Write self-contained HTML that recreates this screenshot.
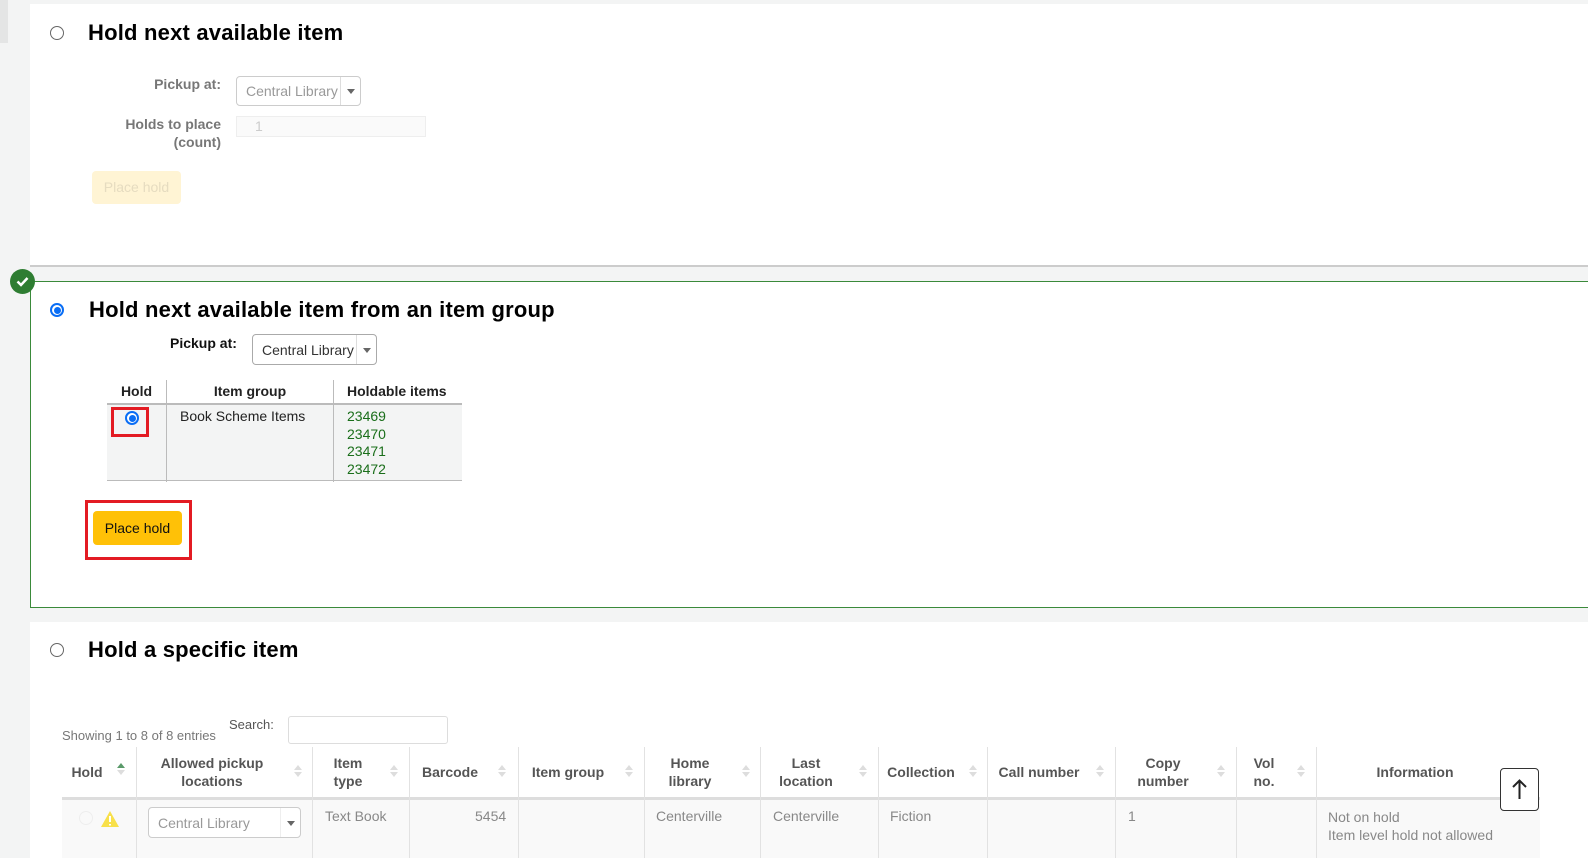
<!DOCTYPE html>
<html><head><style>
*{box-sizing:border-box;margin:0;padding:0}
body{width:1588px;height:858px;overflow:hidden;background:#f3f4f4;font-family:"Liberation Sans",sans-serif;position:relative;color:#000}
.a{position:absolute}
.panel{position:absolute;left:30px;right:0;background:#fff}
h2{position:absolute;font-size:22px;font-weight:bold;white-space:nowrap;letter-spacing:0.2px}
.radio{position:absolute;width:14px;height:14px;border-radius:50%;border:1px solid #666;background:#fff}
.radio.on{border:2px solid #0a6ef5}
.radio.on:after{content:"";position:absolute;left:1.5px;top:1.5px;width:7px;height:7px;border-radius:50%;background:#0a6ef5}
.lbl{position:absolute;font-size:14px;font-weight:bold;text-align:right;white-space:nowrap}
.sel{position:absolute;border:1px solid #aaa;border-radius:4px;font-size:14px;padding-left:9px;white-space:nowrap;background:#fff}
.sel .ar{position:absolute;right:0;top:0;bottom:0;width:20px;border-left:1px solid #ddd}
.sel .ar:after{content:"";position:absolute;left:6px;top:50%;margin-top:-2px;border:4px solid transparent;border-top:5px solid #666;border-bottom:0}
.th{position:absolute;font-size:14px;font-weight:bold;color:#555;text-align:center;line-height:18px}
.sort{position:absolute;width:8px}
.sort:before{content:"";position:absolute;left:0;top:0;border:4px solid transparent;border-bottom:5px solid #ddd;border-top:0}
.sort:after{content:"";position:absolute;left:0;top:7px;border:4px solid transparent;border-top:5px solid #ddd;border-bottom:0}
.vl{position:absolute;width:1px;background:#e2e2e2}
.td{position:absolute;font-size:14px;color:#888;white-space:nowrap}
</style></head><body>
<div class="a" style="left:0;top:0;width:8px;height:43px;background:#e4e5e5"></div>

<div class="panel" style="top:4px;height:263px;border-bottom:2px solid #ccc"></div>
<div class="radio" style="left:50px;top:26px"></div>
<h2 style="left:88px;top:20px">Hold next available item</h2>
<div class="lbl" style="right:1367px;top:76px;color:#777">Pickup at:</div>
<div class="sel" style="left:236px;top:76px;width:125px;height:30px;line-height:29px;color:#999;border-color:#ccc">Central Library<span class="ar"></span></div>
<div class="lbl" style="right:1367px;top:115px;color:#777;line-height:18px">Holds to place<br>(count)</div>
<div class="a" style="left:236px;top:116px;width:190px;height:21px;border:1px solid #eee;background:#fafafa;font-size:14px;color:#ccc;padding-left:18px;line-height:19px">1</div>
<div class="a" style="left:92px;top:171px;width:89px;height:33px;background:#fff4d4;border-radius:4px;color:#e6dcc0;font-size:14px;text-align:center;line-height:33px">Place hold</div>

<div class="panel" style="top:281px;height:327px;border:1px solid #3a8a3a;border-right:0"></div>
<div class="a" style="left:10px;top:269px;width:25px;height:25px;border-radius:50%;background:#2e7d32"><svg width="25" height="25"><path d="M7.5 12.5l3.5 3.5 6.5-7" stroke="#fff" stroke-width="2.5" fill="none"/></svg></div>
<div class="radio on" style="left:50px;top:303px"></div>
<h2 style="left:89px;top:297px">Hold next available item from an item group</h2>
<div class="lbl" style="left:170px;top:335px;color:#111">Pickup at:</div>
<div class="sel" style="left:252px;top:334px;width:125px;height:31px;line-height:30px;color:#333">Central Library<span class="ar"></span></div>
<div class="a" style="left:107px;top:380px;width:355px;height:102px">
 <div class="a" style="left:0;top:23px;width:355px;height:78px;background:#f3f4f4;border-top:2px solid #bbb;border-bottom:1px solid #bbb"></div>
 <div class="a" style="left:59px;top:0;width:1px;height:102px;background:#bbb"></div>
 <div class="a" style="left:226px;top:0;width:1px;height:102px;background:#bbb"></div>
 <div class="a" style="left:0;top:3px;width:59px;text-align:center;font-size:14px;font-weight:bold;color:#222">Hold</div>
 <div class="a" style="left:60px;top:3px;width:166px;text-align:center;font-size:14px;font-weight:bold;color:#222">Item group</div>
 <div class="a" style="left:240px;top:3px;font-size:14px;font-weight:bold;color:#222">Holdable items</div>
 <div class="a" style="left:73px;top:28px;font-size:14px;color:#222">Book Scheme Items</div>
 <div class="a" style="left:240px;top:28px;font-size:14px;color:#1a6e1a;line-height:17.7px">23469<br>23470<br>23471<br>23472</div>
</div>
<div class="a" style="left:111px;top:407px;width:38px;height:30px;border:3px solid #e31b23"></div>
<div class="radio on" style="left:125px;top:411px"></div>
<div class="a" style="left:85px;top:500px;width:107px;height:60px;border:3px solid #e31b23"></div>
<div class="a" style="left:93px;top:511px;width:89px;height:34px;background:#ffc107;border-radius:4px;font-size:14px;text-align:center;line-height:34px;color:#111">Place hold</div>

<div class="panel" style="top:622px;height:236px"></div>
<div class="radio" style="left:50px;top:643px"></div>
<h2 style="left:88px;top:637px">Hold a specific item</h2>
<div class="td" style="left:62px;top:728px;font-size:13px;color:#777">Showing 1 to 8 of 8 entries</div>
<div class="td" style="left:229px;top:717px;font-size:13px;color:#555">Search:</div>
<div class="a" style="left:288px;top:716px;width:160px;height:28px;border:1px solid #ddd;border-radius:3px"></div>
<div class="a" style="left:62px;top:797px;width:1478px;height:61px;background:#f9f9f9;border-top:3px solid #ddd"></div>
<div class="vl" style="left:136px;top:747px;height:111px"></div>
<div class="vl" style="left:312px;top:747px;height:111px"></div>
<div class="vl" style="left:409px;top:747px;height:111px"></div>
<div class="vl" style="left:518px;top:747px;height:111px"></div>
<div class="vl" style="left:644px;top:747px;height:111px"></div>
<div class="vl" style="left:760px;top:747px;height:111px"></div>
<div class="vl" style="left:878px;top:747px;height:111px"></div>
<div class="vl" style="left:987px;top:747px;height:111px"></div>
<div class="vl" style="left:1115px;top:747px;height:111px"></div>
<div class="vl" style="left:1236px;top:747px;height:111px"></div>
<div class="vl" style="left:1316px;top:747px;height:111px"></div>
<div class="th" style="left:66px;top:763px;width:42px">Hold</div>
<div class="a" style="left:117px;top:763px;border:4px solid transparent;border-bottom:5px solid #5a9a6a;border-top:0"></div>
<div class="a" style="left:117px;top:770px;border:4px solid transparent;border-top:5px solid #ddd;border-bottom:0"></div>
<div class="th" style="left:140px;top:754px;width:144px">Allowed pickup<br>locations</div><div class="sort" style="left:294px;top:765px"></div>
<div class="th" style="left:316px;top:754px;width:64px">Item<br>type</div><div class="sort" style="left:390px;top:765px"></div>
<div class="th" style="left:413px;top:763px;width:74px">Barcode</div><div class="sort" style="left:498px;top:765px"></div>
<div class="th" style="left:522px;top:763px;width:92px">Item group</div><div class="sort" style="left:625px;top:765px"></div>
<div class="th" style="left:648px;top:754px;width:84px">Home<br>library</div><div class="sort" style="left:742px;top:765px"></div>
<div class="th" style="left:764px;top:754px;width:84px">Last<br>location</div><div class="sort" style="left:859px;top:765px"></div>
<div class="th" style="left:882px;top:763px;width:78px">Collection</div><div class="sort" style="left:969px;top:765px"></div>
<div class="th" style="left:991px;top:763px;width:96px">Call number</div><div class="sort" style="left:1096px;top:765px"></div>
<div class="th" style="left:1119px;top:754px;width:88px">Copy<br>number</div><div class="sort" style="left:1217px;top:765px"></div>
<div class="th" style="left:1240px;top:754px;width:48px">Vol<br>no.</div><div class="sort" style="left:1297px;top:765px"></div>
<div class="th" style="left:1320px;top:763px;width:190px">Information</div>
<div class="a" style="left:79px;top:811px;width:14px;height:14px;border-radius:50%;border:1px solid #eee"></div>
<svg class="a" style="left:100px;top:810px" width="20" height="18"><path d="M10 1L19 17H1Z" fill="#f8e04a"/><path d="M10 6v6M10 14v1.5" stroke="#fff" stroke-width="2"/></svg>
<div class="sel" style="left:148px;top:807px;width:153px;height:31px;line-height:30px;color:#999;border-color:#ccc">Central Library<span class="ar" style="border-color:#eee"></span></div>
<div class="td" style="left:325px;top:808px">Text Book</div>
<div class="td" style="left:475px;top:808px">5454</div>
<div class="td" style="left:656px;top:808px">Centerville</div>
<div class="td" style="left:773px;top:808px">Centerville</div>
<div class="td" style="left:890px;top:808px">Fiction</div>
<div class="td" style="left:1128px;top:808px">1</div>
<div class="td" style="left:1328px;top:808px;line-height:18px">Not on hold<br>Item level hold not allowed</div>
<div class="a" style="left:1500px;top:768px;width:39px;height:43px;border:1px solid #333;border-radius:4px;background:#fff"><svg width="37" height="41"><path d="M18.5 12v18M12 18l6.5-6.5 6.5 6.5" stroke="#222" stroke-width="2" fill="none"/></svg></div>
</body></html>
